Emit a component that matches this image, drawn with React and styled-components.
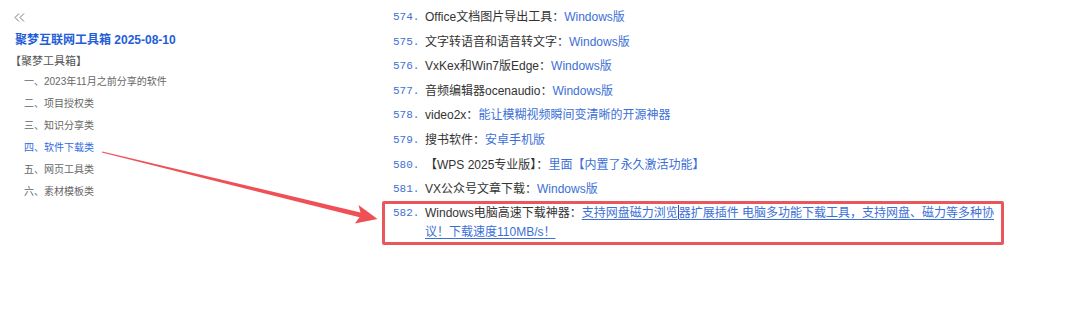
import React from "react";
import styled, { createGlobalStyle } from "styled-components";

const Global = createGlobalStyle`
  html, body { margin: 0; padding: 0; background: #fff; }
  body { font-family: "Liberation Sans", "Noto Sans CJK SC", sans-serif; }
  * { box-sizing: border-box; }
`;

const Page = styled.div`
  position: relative;
  width: 1080px;
  height: 314px;
  display: flex;
  overflow: hidden;
  background: #fff;
`;

const Sidebar = styled.aside`
  width: 382px;
  flex: none;
  display: flex;
  flex-direction: column;
  align-items: flex-start;
`;

const CollapseBtn = styled.div`
  margin: 13px 0 0 14px;
  height: 9px;
  display: flex;
`;

const Title = styled.div`
  margin: 8px 0 0 15px;
  line-height: 20px;
  font-size: 12px;
  font-weight: 700;
  color: #1f5ed8;
  white-space: nowrap;
`;

const Heading = styled.div`
  margin: 1px 0 0 10px;
  line-height: 20px;
  font-size: 11px;
  color: #555;
`;

const NavList = styled.ul`
  list-style: none;
  margin: 0;
  padding: 0 0 0 24px;
`;

const NavItem = styled.li`
  line-height: 22px;
  font-size: 10px;
  color: ${(p) => (p.$active ? "#2f6be0" : "#666")};
  white-space: nowrap;
`;

const Main = styled.main`
  width: 622px;
  flex: none;
  padding-top: 5px;
`;

const List = styled.ol`
  list-style: none;
  margin: 0;
  padding: 0;
`;

const Item = styled.li`
  display: flex;
  align-items: flex-start;
  border: ${(p) => (p.$marked ? "3px solid #e9565b" : "2px solid transparent")};
  border-radius: 2px;
  padding: ${(p) => (p.$marked ? "0 1px 0 8px" : "0 2px 0 9px")};
  margin-top: ${(p) => (p.$marked ? "-1px" : "0")};
  margin-bottom: 0.6px;
  line-height: ${(p) => (p.$marked ? "19px" : "20px")};
  font-size: 12px;
`;

const Num = styled.span`
  flex: none;
  width: 32px;
  font-family: "Liberation Mono", "DejaVu Sans Mono", monospace;
  font-size: 11px;
  color: #4271d4;
`;

const Text = styled.span`
  flex: 1;
  color: #333;
`;

const Link = styled.a`
  color: #3c6fd6;
  text-decoration: ${(p) => (p.$underline ? "underline" : "none")};
  text-underline-offset: 2px;
`;

const Caret = styled.span`
  display: inline-block;
  width: 1px;
  height: 14px;
  vertical-align: -2px;
  background: #2a4fa8;
`;

const Overlay = styled.svg`
  position: absolute;
  left: 0;
  top: 0;
  pointer-events: none;
`;

const items = [
  { n: 574, t: "Office文档图片导出工具：", l: "Windows版" },
  { n: 575, t: "文字转语音和语音转文字：", l: "Windows版" },
  { n: 576, t: "VxKex和Win7版Edge：", l: "Windows版" },
  { n: 577, t: "音频编辑器ocenaudio：", l: "Windows版" },
  { n: 578, t: "video2x：", l: "能让模糊视频瞬间变清晰的开源神器" },
  { n: 579, t: "搜书软件：", l: "安卓手机版" },
  { n: 580, t: "【WPS 2025专业版】：", l: "里面【内置了永久激活功能】" },
  { n: 581, t: "VX公众号文章下载：", l: "Windows版" },
];

const nav = [
  "一、2023年11月之前分享的软件",
  "二、项目授权类",
  "三、知识分享类",
  "四、软件下载类",
  "五、网页工具类",
  "六、素材模板类",
];

export default function App() {
  return (
    <>
      <Global />
      <Page>
        <Sidebar>
          <CollapseBtn>
            <svg width="11" height="9" viewBox="0 0 11 9" fill="none" stroke="#777" strokeWidth="1">
              <path d="M5 0.5 L1 4.5 L5 8.5 M10 0.5 L6 4.5 L10 8.5" />
            </svg>
          </CollapseBtn>
          <Title>聚梦互联网工具箱 2025-08-10</Title>
          <Heading>【聚梦工具箱】</Heading>
          <NavList>
            {nav.map((s, i) => (
              <NavItem key={s} $active={i === 3}>{s}</NavItem>
            ))}
          </NavList>
        </Sidebar>
        <Main>
          <List>
            {items.map((it) => (
              <Item key={it.n}>
                <Num>{it.n}.</Num>
                <Text>
                  {it.t}
                  <Link>{it.l}</Link>
                </Text>
              </Item>
            ))}
            <Item $marked>
              <Num>582.</Num>
              <Text>
                Windows电脑高速下载神器：
                <Link $underline>
                  支持网盘磁力浏览<Caret />器扩展插件 电脑多功能下载工具，支持网盘、磁力等多种协议！下载速度110MB/s！
                </Link>
              </Text>
            </Item>
          </List>
        </Main>
        <Overlay width="1080" height="314" viewBox="0 0 1080 314">
          <polygon
            fill="#ee5055"
            points="102.2,151.4 360.5,212.4 358.5,205 377.5,219 354.8,223.6 359.5,217.2 101.9,152.6"
          />
        </Overlay>
      </Page>
    </>
  );
}
